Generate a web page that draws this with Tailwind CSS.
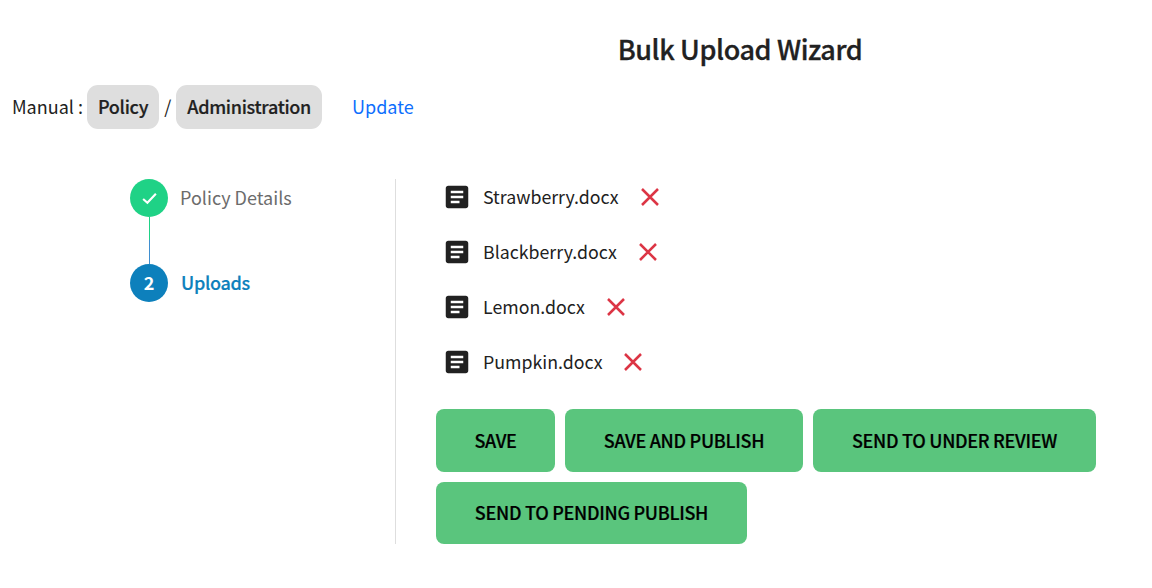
<!DOCTYPE html>
<html lang="en">
<head>
  <meta charset="UTF-8" />
  <title>Bulk Upload Wizard</title>
  <script src="https://cdn.jsdelivr.net/npm/@tailwindcss/browser@4"></script>
</head>
<body class="bg-white text-[#212121] font-['Noto_Sans_CJK_SC',sans-serif] overflow-hidden">
  <div class="w-[1152px] h-[588px]">
    <h1 class="pl-[328px] pt-[29px] text-center text-[27px] leading-[40px] font-medium tracking-[-0.4px] [-webkit-text-stroke:0.3px_#212121]">Bulk Upload Wizard</h1>

    <!-- Manual path -->
    <div class="flex items-center pl-3 mt-4 text-lg h-11">
      <span class="pb-0.5">Manual :</span>
      <span class="ml-1 px-[11px] h-11 leading-[42px] rounded-[11px] bg-[#dedede] font-medium tracking-[-0.3px] [-webkit-text-stroke:0.2px_#212121]">Policy</span>
      <span class="mx-[5px] pb-0.5">/</span>
      <span class="px-[11px] h-11 leading-[42px] rounded-[11px] bg-[#dedede] font-medium tracking-[-0.3px] [-webkit-text-stroke:0.2px_#212121]">Administration</span>
      <a class="ml-[30px] pb-0.5 text-[#0d6efd]">Update</a>
    </div>

    <div class="flex mt-[50px]">
      <!-- Steps -->
      <div class="w-[396px] h-[365px] pl-[130px] border-r border-[#dedede]">
        <div class="flex items-center gap-[13px] h-[38px]">
          <span class="w-[38px] h-[38px] rounded-full bg-[#1fd286] flex items-center justify-center">
            <svg class="w-[17px] h-[17px]" viewBox="0 0 16 16" fill="none" stroke="white" stroke-width="2"><path d="M2 8.500l4 3.500 8-8.500" /></svg>
          </span>
          <span class="pb-0.5 text-lg text-[#6c6c6c] -ml-px">Policy Details</span>
        </div>
        <div class="w-px h-[47px] ml-[19px] bg-linear-to-b from-[#1fd286] from-50% to-[#3f8fd0] to-50%"></div>
        <div class="flex items-center gap-[13px] h-[38px]">
          <span class="w-[38px] h-[38px] rounded-full bg-[#0d80bc] text-white font-bold text-lg pb-0.5 flex items-center justify-center">2</span>
          <span class="pb-0.5 text-lg font-medium tracking-[-0.3px] [-webkit-text-stroke:0.2px_#0d80bc] text-[#0d80bc]">Uploads</span>
        </div>
      </div>

      <!-- Files -->
      <div class="pl-10 w-[720px]">
        <ul class="pl-[10px] pt-[6px] flex flex-col gap-[31px] text-[17.75px]">
          <li class="flex items-center h-6">
            <svg class="w-[30px] h-[30px] -ml-1" viewBox="0 0 24 24" fill="#212121"><path d="M19 3H5c-1.100 0-2 .9-2 2v14c0 1.100.9 2 2 2h14c1.100 0 2-.9 2-2V5c0-1.100-.9-2-2-2zm-5 14H7v-2h7v2zm3-4H7v-2h10v2zm0-4H7V7h10v2z"/></svg>
            <span class="ml-[11px] pb-0.5">Strawberry.docx</span>
            <svg class="w-5 h-5 ml-[21px]" viewBox="0 0 20 20" stroke="#dc3545" stroke-width="2.500"><path d="M2 2l16 16M18 2L2 18"/></svg>
          </li>
          <li class="flex items-center h-6">
            <svg class="w-[30px] h-[30px] -ml-1" viewBox="0 0 24 24" fill="#212121"><path d="M19 3H5c-1.100 0-2 .9-2 2v14c0 1.100.9 2 2 2h14c1.100 0 2-.9 2-2V5c0-1.100-.9-2-2-2zm-5 14H7v-2h7v2zm3-4H7v-2h10v2zm0-4H7V7h10v2z"/></svg>
            <span class="ml-[11px] pb-0.5">Blackberry.docx</span>
            <svg class="w-5 h-5 ml-[21px]" viewBox="0 0 20 20" stroke="#dc3545" stroke-width="2.500"><path d="M2 2l16 16M18 2L2 18"/></svg>
          </li>
          <li class="flex items-center h-6">
            <svg class="w-[30px] h-[30px] -ml-1" viewBox="0 0 24 24" fill="#212121"><path d="M19 3H5c-1.100 0-2 .9-2 2v14c0 1.100.9 2 2 2h14c1.100 0 2-.9 2-2V5c0-1.100-.9-2-2-2zm-5 14H7v-2h7v2zm3-4H7v-2h10v2zm0-4H7V7h10v2z"/></svg>
            <span class="ml-[11px] pb-0.5">Lemon.docx</span>
            <svg class="w-5 h-5 ml-[21px]" viewBox="0 0 20 20" stroke="#dc3545" stroke-width="2.500"><path d="M2 2l16 16M18 2L2 18"/></svg>
          </li>
          <li class="flex items-center h-6">
            <svg class="w-[30px] h-[30px] -ml-1" viewBox="0 0 24 24" fill="#212121"><path d="M19 3H5c-1.100 0-2 .9-2 2v14c0 1.100.9 2 2 2h14c1.100 0 2-.9 2-2V5c0-1.100-.9-2-2-2zm-5 14H7v-2h7v2zm3-4H7v-2h10v2zm0-4H7V7h10v2z"/></svg>
            <span class="ml-[11px] pb-0.5">Pumpkin.docx</span>
            <svg class="w-5 h-5 ml-[21px]" viewBox="0 0 20 20" stroke="#dc3545" stroke-width="2.500"><path d="M2 2l16 16M18 2L2 18"/></svg>
          </li>
        </ul>

        <!-- Actions -->
        <div class="flex flex-wrap gap-[10px] mt-[35px] text-lg font-medium tracking-[-0.3px] [-webkit-text-stroke:0.2px_black]">
          <button class="w-[119px] h-[63px] pb-0.5 rounded-lg bg-[#5ac57d] text-black">SAVE</button>
          <button class="w-[238px] h-[63px] pb-0.5 rounded-lg bg-[#5ac57d] text-black">SAVE AND PUBLISH</button>
          <button class="w-[283px] h-[63px] pb-0.5 rounded-lg bg-[#5ac57d] text-black">SEND TO UNDER REVIEW</button>
          <button class="w-[311px] h-[62px] pb-0.5 rounded-lg bg-[#5ac57d] text-black">SEND TO PENDING PUBLISH</button>
        </div>
      </div>
    </div>
  </div>
</body>
</html>
